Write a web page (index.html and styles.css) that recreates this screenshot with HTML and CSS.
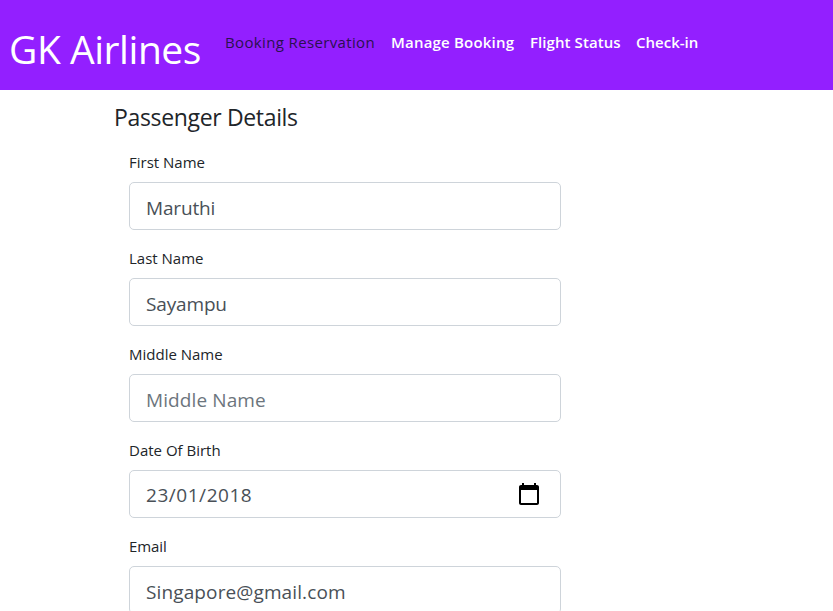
FILE: index.html
```html
<!DOCTYPE html>
<html lang="en">
<head>
<meta charset="utf-8">
<title>GK Airlines</title>
<link rel="stylesheet" href="styles.css">
</head>
<body>
<header class="navbar">
  <a class="brand">GK Airlines</a>
  <nav class="links">
    <a class="link active">Booking Reservation</a>
    <a class="link manage">Manage Booking</a>
    <a class="link status">Flight Status</a>
    <a class="link">Check-in</a>
  </nav>
</header>
<main class="content">
  <h1 class="title">Passenger Details</h1>
  <form class="form">
    <div class="group"><label>First Name</label><div class="control"><span class="first">Maruthi</span></div></div>
    <div class="group"><label>Last Name</label><div class="control"><span class="last">Sayampu</span></div></div>
    <div class="group"><label>Middle Name</label><div class="control placeholder"><span>Middle Name</span></div></div>
    <div class="group"><label>Date Of Birth</label><div class="control date"><span>23/01/2018</span>
      <svg class="calendar" viewBox="0 0 24 24"><path d="M20 3h-1V1h-2v2H7V1H5v2H4c-1.100 0-2 .9-2 2v16c0 1.100.9 2 2 2h16c1.100 0 2-.9 2-2V5c0-1.100-.9-2-2-2zm0 18H4V8h16v13z"/></svg></div></div>
    <div class="group"><label class="email">Email</label><div class="control"><span class="address">Singapore@gmail.com</span></div></div>
  </form>
</main>
</body>
</html>
```
FILE: styles.css
```css
* { box-sizing: border-box; }
html, body { height: 100%; }
body { margin: 0; overflow: hidden; background: #fff; color: #212529; font-family: "Open Sans", "Noto Sans", sans-serif; font-size: 15px; line-height: 24px; }
.navbar { display: flex; height: 90px; background: #931fff; color: #fff; padding-left: 9px; }
.brand { width: 216px; padding-top: 19px; font-size: 39px; line-height: 60px; letter-spacing: -0.45px; white-space: nowrap; }
.links { display: flex; gap: 16px; padding-top: 30px; font-weight: 600; white-space: nowrap; }
.active { width: 150px; color: #2b1050; font-weight: 500; letter-spacing: 0.36px; }
.manage { width: 123px; letter-spacing: 0.2px; }
.status { width: 90px; letter-spacing: 0.080px; }
.title { margin: 0 0 18px; font-size: 23px; font-weight: 400; line-height: 29px; letter-spacing: -0.340px; }
.content { width: 447px; margin-left: 114px; padding-top: 13px; }
.form { padding-left: 15px; }
.group { height: 96px; }
label { display: block; height: 32px; font-size: 15px; }
.email { letter-spacing: -0.1px; }
.control { display: flex; align-items: center; justify-content: space-between; height: 48px; padding: 4px 16px 0; border: 1px solid #ced4da; border-radius: 5px; color: #495057; font-size: 19px; }
.first, .last { letter-spacing: -0.15px; }
.address { letter-spacing: 0.120px; }
.placeholder { color: #6c757d; letter-spacing: 0.1px; }
.date { padding: 1px 19px 0 16px; letter-spacing: 0.540px; }
.calendar { width: 24px; height: 24px; margin-top: -1px; fill: #000; }
```
